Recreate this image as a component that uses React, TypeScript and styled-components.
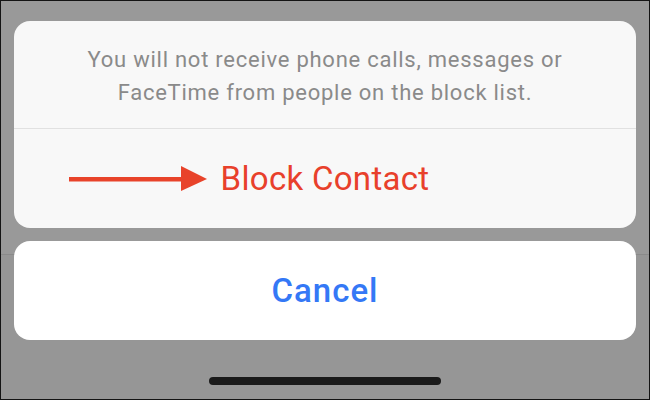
import React from "react";
import styled, { createGlobalStyle } from "styled-components";

const Global = createGlobalStyle`
  html, body { margin: 0; padding: 0; }
  body { font-family: Roboto, "Liberation Sans", Arial, sans-serif; }
  * { box-sizing: border-box; }
`;

const Frame = styled.div`
  width: 650px;
  height: 400px;
  border: 1px solid #141414;
  background-color: #999999;
  background-image: linear-gradient(
    to bottom,
    transparent 253px,
    #8a8a8a 253px,
    #8a8a8a 254px,
    #969696 254px
  );
  padding: 20px 13px 0;
  display: flex;
  flex-direction: column;
  align-items: stretch;
`;

const Sheet = styled.div<{ $bg: string }>`
  background: ${(p) => p.$bg};
  border-radius: 16px;
  display: flex;
  flex-direction: column;
  overflow: hidden;
`;

const Message = styled.div`
  height: 107px;
  display: flex;
  align-items: center;
  justify-content: center;
  text-align: center;
  color: #8a8a8a;
  font-size: 22px;
  letter-spacing: 0.75px;
  line-height: 33px;
  padding-top: 2px;
`;

const Divider = styled.div`
  height: 1px;
  background: #e1e1e1;
`;

const Action = styled.div<{ $h: number; $color: string; $weight: number; $ls: number }>`
  height: ${(p) => p.$h}px;
  display: flex;
  align-items: center;
  justify-content: center;
  color: ${(p) => p.$color};
  font-size: 33px;
  font-weight: ${(p) => p.$weight};
  letter-spacing: ${(p) => p.$ls}px;
`;

const ActionInner = styled.span`
  position: relative;
  display: inline-block;
`;

const Arrow = styled.svg`
  position: absolute;
  right: 100%;
  margin-right: 14px;
  top: 50%;
  transform: translateY(-50%);
`;

const Gap = styled.div`
  height: 13px;
`;

const HomeBar = styled.div`
  margin: 37px auto 0;
  width: 232px;
  height: 8px;
  border-radius: 4px;
  background: #1a1a1a;
`;

export default function App() {
  return (
    <>
      <Global />
      <Frame>
        <Sheet $bg="#f8f8f8">
          <Message>
            You will not receive phone calls, messages or
            <br />
            FaceTime from people on the block list.
          </Message>
          <Divider />
          <Action $h={99} $color="#e8402b" $weight={400} $ls={0.3}>
            <ActionInner>
              <Arrow width="138" height="26" viewBox="0 0 138 26">
                <rect x="0" y="11" width="115" height="4.5" fill="#e8432a" />
                <polygon points="112,0 138,13 112,25" fill="#e8432a" />
              </Arrow>
              Block Contact
            </ActionInner>
          </Action>
        </Sheet>
        <Gap />
        <Sheet $bg="#ffffff">
          <Action $h={99} $color="#3478f6" $weight={500} $ls={1}>
            Cancel
          </Action>
        </Sheet>
        <HomeBar />
      </Frame>
    </>
  );
}
